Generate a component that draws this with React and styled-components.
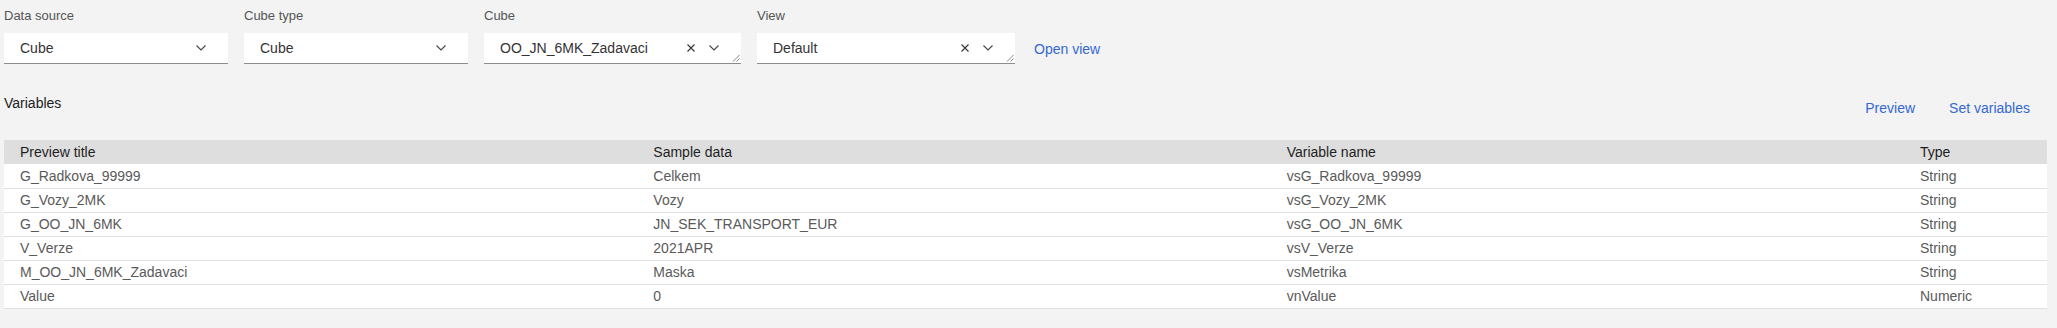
import React from "react";
import styled, { createGlobalStyle } from "styled-components";

const GlobalStyle = createGlobalStyle`
  html, body {
    margin: 0;
    padding: 0;
    background: #f3f3f3;
    font-family: "Liberation Sans", Arial, sans-serif;
  }
  * { box-sizing: border-box; }
`;

const Page = styled.div`
  padding: 8px 10px 20px 4px;
  background: #f3f3f3;
  min-height: 328px;
`;

const Filters = styled.div`
  display: flex;
  align-items: flex-end;
  gap: 16px;
`;

const Field = styled.div`
  display: flex;
  flex-direction: column;
  width: ${(p) => p.$width}px;
`;

const Label = styled.div`
  font-size: 13px;
  line-height: 16px;
  color: #555;
  margin-bottom: 9px;
  white-space: nowrap;
`;

const SelectBox = styled.div`
  position: relative;
  display: flex;
  align-items: center;
  height: 30px;
  padding: 0 22px 0 16px;
  background: #fff;
  border-bottom: 1px solid #8c8c8c;
  box-sizing: content-box;
`;

const SelectValue = styled.div`
  flex: 1;
  font-size: 14px;
  color: #333;
  white-space: nowrap;
  overflow: hidden;
`;

const Icons = styled.div`
  display: flex;
  align-items: center;
  gap: 14px;
`;

const Grip = styled.svg`
  position: absolute;
  right: 1px;
  bottom: 1px;
`;

const LinkButton = styled.button`
  background: none;
  border: none;
  padding: 0 ${(p) => p.$pad || 0}px;
  font-family: inherit;
  font-size: 14px;
  color: #3568d4;
  cursor: pointer;
  height: 32px;
  line-height: 32px;
  white-space: nowrap;
`;

const OpenViewWrap = styled.div`
  display: flex;
  align-items: center;
  height: 31px;
  padding-left: 3px;
`;

const SectionHeader = styled.div`
  display: flex;
  justify-content: space-between;
  align-items: center;
  height: 32px;
  margin-top: 28px;
`;

const SectionTitle = styled.div`
  font-size: 14px;
  color: #222;
  margin-bottom: 10px;
`;

const Actions = styled.div`
  display: flex;
`;

const Table = styled.table`
  width: 100%;
  border-collapse: collapse;
  table-layout: fixed;
  margin-top: 16px;
  font-size: 14px;
`;

const Th = styled.th`
  height: 24px;
  padding: 0 16px;
  text-align: left;
  font-weight: normal;
  color: #1e1e1e;
  background: #dedede;
  white-space: nowrap;
`;

const Td = styled.td`
  height: 24px;
  padding: 0 16px;
  background: #fff;
  color: #5a5a5a;
  border-bottom: 1px solid #e0e0e0;
  white-space: nowrap;
  overflow: hidden;
`;

const Chevron = () => (
  <svg width="10" height="6" viewBox="0 0 10 6">
    <polyline points="0.5,0.5 5,5 9.5,0.5" fill="none" stroke="#444" strokeWidth="1.1" />
  </svg>
);

const ClearX = () => (
  <svg width="8" height="8" viewBox="0 0 8 8">
    <path d="M0.5 0.5 L7.5 7.5 M7.5 0.5 L0.5 7.5" stroke="#333" strokeWidth="1.1" />
  </svg>
);

const ResizeGrip = () => (
  <Grip width="8" height="8" viewBox="0 0 8 8">
    <path d="M7.5 1 L1 7.5 M7.5 4.5 L4.5 7.5" stroke="#777" strokeWidth="0.9" />
  </Grip>
);

const Select = ({ label, value, width, clearable }) => (
  <Field $width={width}>
    <Label>{label}</Label>
    <SelectBox>
      <SelectValue>{value}</SelectValue>
      <Icons>
        {clearable && <ClearX />}
        <Chevron />
      </Icons>
      {clearable && <ResizeGrip />}
    </SelectBox>
  </Field>
);

const rows = [
  ["G_Radkova_99999", "Celkem", "vsG_Radkova_99999", "String"],
  ["G_Vozy_2MK", "Vozy", "vsG_Vozy_2MK", "String"],
  ["G_OO_JN_6MK", "JN_SEK_TRANSPORT_EUR", "vsG_OO_JN_6MK", "String"],
  ["V_Verze", "2021APR", "vsV_Verze", "String"],
  ["M_OO_JN_6MK_Zadavaci", "Maska", "vsMetrika", "String"],
  ["Value", "0", "vnValue", "Numeric"],
];

export default function App() {
  return (
    <>
      <GlobalStyle />
      <Page>
        <Filters>
          <Select label="Data source" value="Cube" width={224} />
          <Select label="Cube type" value="Cube" width={224} />
          <Select label="Cube" value="OO_JN_6MK_Zadavaci" width={257} clearable />
          <Select label="View" value="Default" width={258} clearable />
          <OpenViewWrap>
            <LinkButton>Open view</LinkButton>
          </OpenViewWrap>
        </Filters>

        <SectionHeader>
          <SectionTitle>Variables</SectionTitle>
          <Actions>
            <LinkButton $pad={17}>Preview</LinkButton>
            <LinkButton $pad={17}>Set variables</LinkButton>
          </Actions>
        </SectionHeader>

        <Table>
          <colgroup>
            <col style={{ width: "31%" }} />
            <col style={{ width: "31%" }} />
            <col style={{ width: "31%" }} />
            <col style={{ width: "7%" }} />
          </colgroup>
          <thead>
            <tr>
              <Th>Preview title</Th>
              <Th>Sample data</Th>
              <Th>Variable name</Th>
              <Th>Type</Th>
            </tr>
          </thead>
          <tbody>
            {rows.map((r) => (
              <tr key={r[0]}>
                {r.map((c, i) => (
                  <Td key={i}>{c}</Td>
                ))}
              </tr>
            ))}
          </tbody>
        </Table>
      </Page>
    </>
  );
}
